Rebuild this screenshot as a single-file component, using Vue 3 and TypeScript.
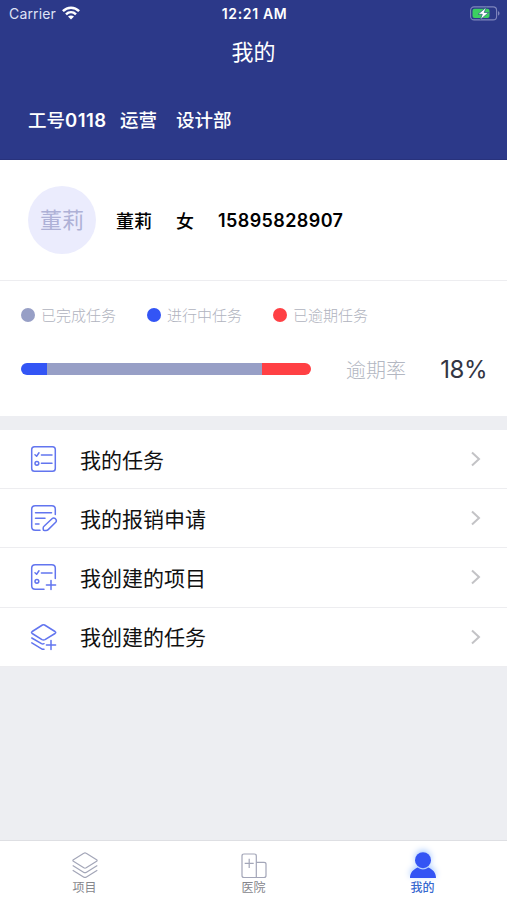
<script setup lang="ts">
interface Segment {
  key: string
  width: number
}

interface Legend {
  key: string
  label: string
}

interface MenuItem {
  icon: 'tasks' | 'claim' | 'project' | 'layers'
  label: string
}

const legends: Legend[] = [
  { key: 'done', label: '已完成任务' },
  { key: 'doing', label: '进行中任务' },
  { key: 'late', label: '已逾期任务' },
]

const segments: Segment[] = [
  { key: 'doing', width: 26 },
  { key: 'done', width: 214.5 },
  { key: 'late', width: 49.5 },
]

const menu: MenuItem[] = [
  { icon: 'tasks', label: '我的任务' },
  { icon: 'claim', label: '我的报销申请' },
  { icon: 'project', label: '我创建的项目' },
  { icon: 'layers', label: '我创建的任务' },
]
</script>

<template>
  <div class="screen">
    <header class="header">
      <div class="status">
        <div class="carrier">
          <span>Carrier</span>
          <svg class="wifi" width="18" height="14" viewBox="0 0 18 14">
            <g fill="none" stroke="#fff" stroke-width="2.5">
              <path d="M.9 5.2C5.5.6 12.500 .6 17.100 5.200" />
              <path d="M4 8.300C6.900 5.500 11.100 5.500 14 8.300" />
            </g>
            <path d="M9 13.500 6 10.500C7.700 9 10.300 9 12 10.500Z" fill="#fff" />
          </svg>
        </div>
        <span class="time">12:21 AM</span>
        <svg class="battery" width="30" height="15" viewBox="0 0 30 15">
          <rect x=".6" y=".9" width="26" height="13" rx="3.500" fill="none" stroke="#7f86bd" stroke-width="1.100" />
          <rect x="2.500" y="2.800" width="17" height="9.200" rx="2" fill="#3bcf60" />
          <path d="M28 5.200c2 .7 2 3.600 0 4.400z" fill="#7f86bd" />
          <path d="M16.300 1.200 8 8.300h4.300l-2 5.400 8.300-7.200h-4.400z" fill="#fff" stroke="#2c5a80" stroke-width=".7" />
        </svg>
      </div>
      <h1 class="title">我的</h1>
      <div class="job">
        <span class="job-no">工号<b>0118</b></span>
        <span class="job-role">运营</span>
        <span>设计部</span>
      </div>
    </header>

    <section class="profile">
      <div class="avatar">董莉</div>
      <span class="name">董莉</span>
      <span class="gender">女</span>
      <span class="phone">15895828907</span>
    </section>

    <section class="stats">
      <div class="legends">
        <div v-for="l in legends" :key="l.key" class="legend">
          <i class="dot" :class="l.key"></i>
          <span>{{ l.label }}</span>
        </div>
      </div>
      <div class="progress">
        <div class="bar">
          <i v-for="s in segments" :key="s.key" :class="s.key" :style="{ width: s.width + 'px' }"></i>
        </div>
        <span class="rate-label">逾期率</span>
        <span class="rate">18%</span>
      </div>
    </section>

    <nav class="menu">
      <a v-for="m in menu" :key="m.icon" class="row">
        <svg class="row-icon" width="28" height="28" viewBox="0 0 28 28">
          <template v-if="m.icon === 'tasks'">
            <rect x="1.700" y="1.700" width="23.600" height="24.600" rx="2.800" />
            <path d="M5 9.800 6.600 11.200 9 7.800M11.400 10H22M11.400 18.300H22" />
            <circle cx="6.900" cy="18.300" r="1.900" />
          </template>
          <template v-else-if="m.icon === 'claim'">
            <path d="M25.300 10.500V5.200Q25.300 1.700 21.800 1.700H5.200Q1.700 1.700 1.700 5.200V22.800Q1.700 26.300 5.200 26.300H10M5.500 8.800H21.500M5.500 14.200H15M5.500 20H9" />
            <path d="M14 22.200 22 14.700Q23.600 13.300 25.400 14.700 27.200 16.500 25.700 18.200L18.200 25.600Q17.300 26.500 16 26.500H14.300Q13.200 26.500 13.200 25.300V24Q13.200 22.900 14 22.200Z" />
          </template>
          <template v-else-if="m.icon === 'project'">
            <path d="M25.300 15.500V5.200Q25.300 1.700 21.800 1.700H5.200Q1.700 1.700 1.700 5.200V22.800Q1.700 26.300 5.200 26.300H14M5 9.800 6.600 11.200 9 7.800M11.400 10H22M21 17.500V26.500M16.400 22H25.600" />
            <circle cx="6.900" cy="18.300" r="1.900" />
          </template>
          <template v-else>
            <path d="M14.600 2 25 8.500Q26.500 9.500 25 10.500L15 16.700Q13.500 17.500 12 16.700L2.200 10.500Q.8 9.500 2.200 8.500L12.400 2Q13.500 1.300 14.600 2ZM1.800 15 11.500 20.700Q12.800 21.400 14 20.700M1.800 19.800 12.500 26.300H14M21 17.500V26.500M16.400 22H25.600" />
          </template>
        </svg>
        <span class="row-label">{{ m.label }}</span>
        <svg class="chevron" width="12" height="16" viewBox="0 0 12 16">
          <path d="M2 1.500 9 8 2 14.500" />
        </svg>
      </a>
    </nav>

    <footer class="tabs">
      <div class="tab">
        <svg width="30" height="30" viewBox="0 0 30 30">
          <g class="tab-line">
            <path d="M13.800 3.200Q15 2.400 16.200 3.200L26.600 9.700Q27.600 10.500 26.600 11.300L16.200 17.800Q15 18.500 13.800 17.800L3.400 11.300Q2.400 10.500 3.400 9.700Z" />
            <path d="M2.700 15.500 13.500 22.200Q15 23.100 16.500 22.200L27.300 15.500M2.700 20.300 13.500 27Q15 27.900 16.500 27L27.300 20.300" />
          </g>
        </svg>
        <span>项目</span>
      </div>
      <div class="tab">
        <svg width="30" height="30" viewBox="0 0 30 30">
          <g class="tab-line">
            <path d="M17.300 27.500V6Q17.300 4 15.300 4H5Q3 4 3 6V25.500Q3 27.500 5 27.500H25Q27 27.500 27 25.500V14Q27 12.300 25 12.300H17.300M10.200 8.800V18M5.700 13.400H14.700" />
          </g>
        </svg>
        <span>医院</span>
      </div>
      <div class="tab active">
        <svg width="30" height="30" viewBox="0 0 30 30">
          <circle cx="15" cy="10.200" r="8" fill="#3454f4" />
          <path d="M2 28C2 22.500 5.500 19.500 9.600 17.600Q15 21.300 20.400 17.600C24.500 19.500 28 22.500 28 28Z" fill="#3454f4" />
        </svg>
        <span>我的</span>
      </div>
    </footer>
  </div>
</template>

<style>
body {
  background: #edeef2;
}
</style>

<style scoped>
.screen {
  box-sizing: border-box;
  width: 507px;
  height: 900px;
  display: flex;
  flex-direction: column;
  overflow: hidden;
  background: #edeef2;
  font-family: Inter, "Noto Sans CJK SC", sans-serif;
  color: #111;
}
.header {
  box-sizing: border-box;
  height: 160px;
  flex: none;
  background: #2c3989;
  border-bottom: 1px solid #28327c;
  color: #fff;
}
.status {
  height: 27px;
  display: grid;
  grid-template-columns: 1fr auto 1fr;
  align-items: center;
  padding: 0 7px 0 9px;
  font-size: 14px;
}
.carrier {
  display: flex;
  align-items: center;
  gap: 6px;
  color: #dfe2f5;
  letter-spacing: .15px;
}
.wifi {
  margin-top: -2px;
}
.time {
  font-weight: 600;
  font-size: 14px;
  letter-spacing: .65px;
}
.battery {
  justify-self: end;
  margin-top: -1px;
}
.title {
  margin: 9px 0 0;
  height: 32px;
  line-height: 32px;
  text-align: center;
  font-size: 22px;
  font-weight: 400;
}
.job {
  display: flex;
  align-items: center;
  height: 28px;
  margin-top: 37px;
  padding-left: 28px;
  font-size: 18.500px;
  font-weight: 500;
  white-space: nowrap;
}
.job b {
  font-weight: 600;
  font-size: 18.500px;
  letter-spacing: .5px;
}
.job-no {
  width: 92px;
}
.job-role {
  width: 56px;
}
.profile {
  box-sizing: border-box;
  height: 121px;
  flex: none;
  display: flex;
  align-items: center;
  padding-left: 28px;
  background: #fff;
  border-bottom: 1px solid #ededf0;
  font-size: 18px;
  font-weight: 500;
  color: #000;
  white-space: nowrap;
}
.avatar {
  width: 68px;
  height: 68px;
  line-height: 68px;
  border-radius: 50%;
  background: #ebecfd;
  color: #aeb1d6;
  font-size: 22px;
  font-weight: 400;
  text-align: center;
  margin-right: 20px;
}
.name {
  width: 60px;
}
.gender {
  width: 42px;
}
.phone {
  font-weight: 600;
  font-size: 18px;
  letter-spacing: .4px;
}
.stats {
  box-sizing: border-box;
  height: 135px;
  flex: none;
  padding: 22px 20px 0 21px;
  background: #fff;
}
.legends {
  display: flex;
  height: 24px;
}
.legend {
  width: 126px;
  display: flex;
  align-items: center;
  gap: 6px;
  font-size: 15px;
  font-weight: 300;
  color: #b0b3be;
  white-space: nowrap;
}
.legend span {
  margin-top: -1px;
}
.dot {
  width: 14px;
  height: 14px;
  border-radius: 50%;
}
.done {
  background: #979fc6;
}
.doing {
  background: #3355f5;
}
.late {
  background: #ff4044;
}
.progress {
  display: flex;
  align-items: center;
  height: 36px;
  margin-top: 24px;
}
.bar {
  display: flex;
  width: 290px;
  height: 12px;
  border-radius: 6px;
  overflow: hidden;
}
.rate-label {
  margin-left: 35px;
  font-size: 20px;
  font-weight: 300;
  color: #b3b7c2;
}
.rate {
  margin-left: auto;
  font-size: 24px;
  letter-spacing: -.5px;
  color: #333543;
}
.menu {
  margin-top: 14px;
  flex: none;
}
.row {
  box-sizing: border-box;
  display: flex;
  align-items: center;
  height: 59.200px;
  padding: 0 25px 0 30px;
  background: #fff;
  border-bottom: 1px solid #ededf0;
}
.row-icon {
  fill: none;
  stroke: #6275ef;
  stroke-width: 1.500;
  stroke-linecap: round;
  stroke-linejoin: round;
}
.row-label {
  flex: 1;
  margin-left: 22px;
  padding-top: 3px;
  font-size: 21px;
  line-height: 30px;
}
.chevron {
  fill: none;
  stroke: #c3c3c6;
  stroke-width: 2;
}
.tabs {
  box-sizing: border-box;
  height: 60px;
  flex: none;
  margin-top: auto;
  display: flex;
  background: #fff;
  border-top: 1px solid #dedfe3;
}
.tab {
  flex: 1;
  display: flex;
  flex-direction: column;
  align-items: center;
  padding-top: 9px;
  font-size: 12px;
  line-height: 16px;
  color: #85868c;
}
.tab-line {
  fill: none;
  stroke: #a3a6b8;
  stroke-width: 1.200;
  stroke-linejoin: round;
}
.tab.active {
  color: #3768cf;
  font-weight: 500;
}
.active svg {
  overflow: visible;
  filter: drop-shadow(0 -2px 3px #a5c8ff);
}
</style>
